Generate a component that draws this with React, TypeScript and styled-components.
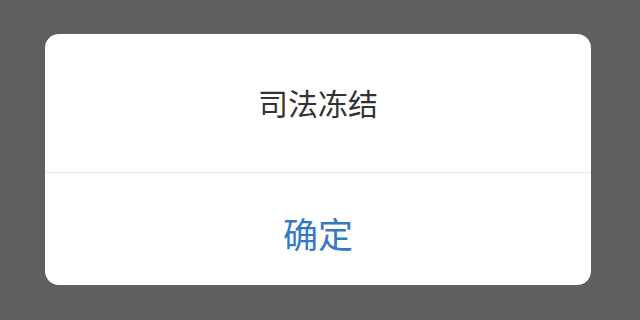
import React from 'react';
import styled, { createGlobalStyle } from 'styled-components';

const GlobalStyle = createGlobalStyle`
  html, body {
    margin: 0;
    padding: 0;
    background: #5f5f5f;
  }
  body {
    font-family: "Noto Sans CJK SC", "Noto Sans", sans-serif;
  }
`;

const Overlay = styled.div`
  width: 640px;
  height: 320px;
  box-sizing: border-box;
  padding: 34px 0 0 45px;
  background: #5f5f5f;
`;

const Dialog = styled.div`
  width: 546px;
  height: 251px;
  background: #ffffff;
  border-radius: 14px;
  display: flex;
  flex-direction: column;
  overflow: hidden;
`;

const Message = styled.div`
  height: 139px;
  display: flex;
  align-items: center;
  justify-content: center;
  border-bottom: 1px solid #e6e6e6;
  box-sizing: border-box;
  padding-bottom: 2px;
  font-size: 30px;
  color: #333333;
`;

const ConfirmButton = styled.button`
  flex: 1;
  border: none;
  background: transparent;
  padding: 6px 0 0;
  font-family: inherit;
  font-size: 35px;
  color: #3478c8;
  cursor: pointer;
`;

export default function App() {
  return (
    <>
      <GlobalStyle />
      <Overlay>
        <Dialog>
          <Message>司法冻结</Message>
          <ConfirmButton>确定</ConfirmButton>
        </Dialog>
      </Overlay>
    </>
  );
}
